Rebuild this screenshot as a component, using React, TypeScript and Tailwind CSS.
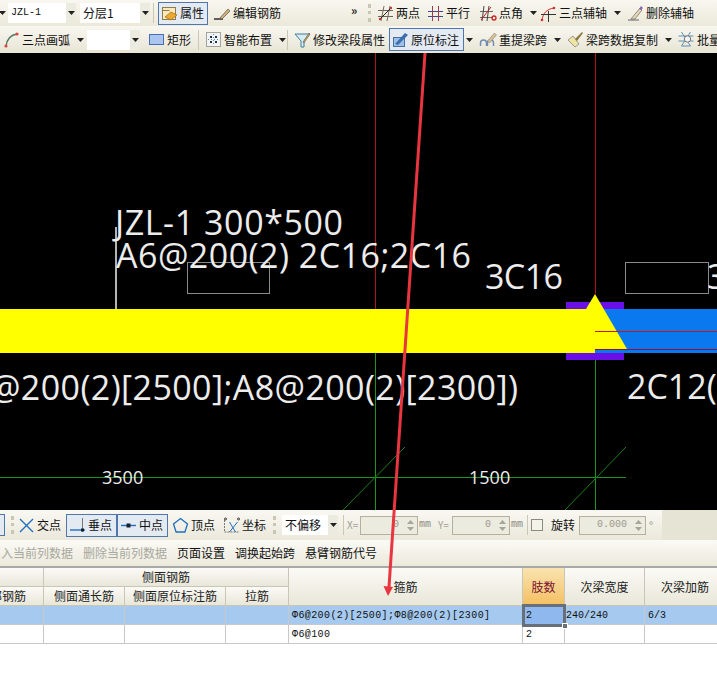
import React from "react";

const CJK = "font-['Noto_Sans_CJK_SC','Liberation_Sans',sans-serif]";

function Arrow() {
  return (
    <svg width="7" height="4" viewBox="0 0 7 4" className="shrink-0">
      <path d="M0 0h7L3.5 4z" fill="#222" />
    </svg>
  );
}

function Sep({ grip }: { grip?: boolean }) {
  if (grip) {
    return <div className="mx-[3px] h-[18px] w-[3px] shrink-0 border-l-[3px] border-dotted border-[#c9c6b3]" />;
  }
  return <div className="mx-[3px] h-[20px] w-px shrink-0 bg-[#c9c7b6]" />;
}

function Combo({ w, text, mono }: { w: string; text: string; mono?: boolean }) {
  return (
    <div className={`flex h-[20px] shrink-0 items-center justify-between bg-white pl-[3px] ${w}`}>
      <span className={`truncate leading-none text-[#111] ${mono ? "font-['Liberation_Mono',monospace] text-[10px]" : "text-[12px]"}`}>{text}</span>
      <span className="flex h-full w-[10px] items-center justify-center bg-[#ecebe0]">
        <Arrow />
      </span>
    </div>
  );
}

function Tool({
  w,
  icon,
  label,
  active,
  arrow,
}: {
  w: string;
  icon?: React.ReactNode;
  label: string;
  active?: boolean;
  arrow?: boolean;
}) {
  return (
    <div
      className={`flex h-[23px] shrink-0 items-center gap-[2px] whitespace-nowrap border px-[2px] text-[12px] leading-none text-[#111] ${w} ${
        active ? "border-[#4f77ad] bg-[#e4eaf2]" : "border-transparent"
      }`}
    >
      {icon}
      <span>{label}</span>
      {arrow && <span className="ml-[5px] flex"><Arrow /></span>}
    </div>
  );
}

const I = ({ children, w = 17 }: { children: React.ReactNode; w?: number }) => (
  <svg width={w} height="17" viewBox="0 0 17 17" fill="none" className="shrink-0">
    {children}
  </svg>
);

const IconProp = () => (
  <I>
    <rect x="1.500" y="2.500" width="13" height="12" fill="#f9e9bb" stroke="#8c7c55" />
    <path d="M1.500 5.500h7" stroke="#8c7c55" />
    <path d="M4 12l6-5 6 3-6 5z" fill="#eda92f" stroke="#a06a10" strokeWidth=".7" />
  </I>
);
const IconEdit = () => (
  <I>
    <path d="M0 14h9" stroke="#222" strokeWidth="1.400" />
    <path d="M6 13L14 4l2 2-8 8z" fill="#d8b070" stroke="#555" strokeWidth=".7" />
  </I>
);
const IconTwo = () => (
  <I>
    <path d="M1 5.500h15M1 11.500h15" stroke="#666" />
    <path d="M4 16L7 1M10 16l3-15" stroke="#7a6a5a" />
    <path d="M2 15L14 3" stroke="#222" />
    <circle cx="14" cy="3" r="1.200" fill="#c33" />
    <circle cx="3" cy="14" r="1.200" fill="#c33" />
  </I>
);
const IconPar = () => (
  <I>
    <path d="M1 6.500h15M1 11.500h15" stroke="#3a4a8a" />
    <path d="M5.500 1v15M11.500 1v15" stroke="#a03a4a" />
  </I>
);
const IconAngle = () => (
  <I w={19}>
    <path d="M1 6.500h13M1 12.500h13" stroke="#666" />
    <path d="M5 1L3 16M10 1L8 16" stroke="#444" />
    <path d="M2 15L12 2" stroke="#c22" />
    <circle cx="15" cy="13" r="2" stroke="#c22" strokeWidth="1.300" />
  </I>
);
const IconArcAxis = () => (
  <I>
    <path d="M2 15C3 8 7 4 14 3" stroke="#c22" />
    <path d="M1 9.500h15M8.500 6v11" stroke="#333" />
    <circle cx="14" cy="3" r="1.300" fill="#c33" />
    <circle cx="2" cy="15" r="1.300" fill="#c33" />
  </I>
);
const IconDel = () => (
  <I>
    <path d="M1 15h11" stroke="#888" strokeWidth="1.400" />
    <path d="M4 14L13 3l2 2-7 9z" fill="#e8d8b0" stroke="#666" strokeWidth=".7" />
    <path d="M12 4l2-3 2 2-2 2z" fill="#8a68b0" />
  </I>
);
const IconArc = () => (
  <I>
    <path d="M3 15C4 8 7 4 14 3" stroke="#4f7a68" strokeWidth="1.400" />
    <circle cx="3" cy="15" r="1.600" fill="#d44" />
    <circle cx="14" cy="3" r="1.600" fill="#d44" />
  </I>
);
const IconRect = () => (
  <I>
    <rect x="1.500" y="3.500" width="14" height="10" fill="#a9c5f0" stroke="#4a6fb0" />
  </I>
);
const IconSmart = () => (
  <I>
    <rect x="1.500" y="1.500" width="14" height="14" fill="#f3f3f3" stroke="#555" strokeDasharray="1 1" />
    <path d="M5 5h2v2H5zM10 5h2v2h-2zM5 10h2v2H5zM10 10h2v2h-2z" fill="#234" />
    <path d="M8.500 3v11M3 8.500h11" stroke="#4a8ac0" strokeDasharray="1 2" />
  </I>
);
const IconSeg = () => (
  <I>
    <path d="M1 3h15L10 10v6H7v-6z" fill="#d5ecf5" stroke="#3f7f95" />
    <path d="M9 11l6-9 1 1-6 9z" fill="#c9a25c" stroke="#555" strokeWidth=".5" />
  </I>
);
const IconOrigin = () => (
  <I>
    <rect x="1.500" y="6.500" width="11" height="9" fill="#9fc0e6" stroke="#4a6fa0" />
    <path d="M3 13L13 2l3 2-10 10z" fill="#3a6fb0" />
  </I>
);
const IconSpan = () => (
  <I w={18}>
    <path d="M1 15v-3c0-4 6-4 6 0v3M8 15v-3c0-4 6-4 6 0v3" stroke="#6b8cb5" strokeWidth="1.400" />
    <path d="M8 10l7-8 2 2-7 8z" fill="#d8c090" stroke="#777" strokeWidth=".5" />
  </I>
);
const IconCopy = () => (
  <I>
    <path d="M1 9l5-4 6 8-4 3z" fill="#efe3a5" stroke="#777" strokeWidth=".7" />
    <path d="M8 8l7-7 1 1-6 8z" fill="#8a7a40" />
  </I>
);
const IconBatch = () => (
  <I w={18}>
    <path d="M1 5h15M1 10h15M4 15h9M4 1l9 14M13 1L4 15" stroke="#5b92b8" />
    <circle cx="10" cy="8" r="3.200" fill="#f4f4f4" stroke="#777" />
  </I>
);
const IconCross = () => (
  <I>
    <path d="M2 2l13 13M15 2L2 15" stroke="#1f6fc0" strokeWidth="1.400" />
  </I>
);
const IconPerp = () => (
  <I>
    <path d="M1 13h15" stroke="#1f6fc0" strokeWidth="1.400" />
    <path d="M13.500 1v14" stroke="#777" />
    <rect x="12" y="11.500" width="3" height="3" fill="#123" />
  </I>
);
const IconMid = () => (
  <I>
    <path d="M1 8.500h15" stroke="#1f6fc0" strokeWidth="1.400" />
    <rect x="6.500" y="6.500" width="4" height="4" fill="#123" />
  </I>
);
const IconVertex = () => (
  <I>
    <path d="M8.500 1.500L15.500 7l-2.600 8H4.100L1.500 7z" stroke="#1f6fc0" strokeWidth="1.300" />
  </I>
);
const IconCoord = () => (
  <I w={18}>
    <path d="M2 3v12h15" stroke="#777" strokeDasharray="2 1" />
    <path d="M7 15l8-10M7 5l6 10" stroke="#1f6fc0" />
    <circle cx="3" cy="2" r="1" stroke="#333" />
    <circle cx="16" cy="2" r="1" stroke="#333" />
  </I>
);

function Spin({ w, value }: { w: string; value: string }) {
  return (
    <div className={`flex h-[19px] shrink-0 items-center justify-end border border-[#b2b09e] bg-[#ecebdf] leading-none text-[#9a9a90] ${w}`}>
      <span className="font-['Liberation_Mono',monospace] text-[10px]">{value}</span>
      <span className="ml-[5px] flex h-full w-[13px] flex-col items-center justify-center gap-[3px]">
        <svg width="7" height="4" viewBox="0 0 7 4"><path d="M0 4h7L3.500 0z" fill="#a5a59a" /></svg>
        <svg width="7" height="4" viewBox="0 0 7 4"><path d="M0 0h7L3.500 4z" fill="#a5a59a" /></svg>
      </span>
    </div>
  );
}

function Canvas() {
  const text = "fill-[#ececec] font-['Open_Sans',sans-serif]";
  return (
    <svg width="717" height="457" viewBox="0 53 717 457" className="block shrink-0 bg-black">
      {/* axes */}
      <path d="M0 477.500H626" stroke="#1c961c" />
      <path d="M375.500 53V309" stroke="#ad141c" />
      <path d="M375.500 353V510M595.500 349V510" stroke="#1c961c" />
      <path d="M343 510L405 447M565 510L626 447" stroke="#1a801a" />
      {/* beam */}
      <rect x="566" y="302" width="58" height="7" fill="#6a0fe6" />
      <rect x="566" y="353" width="58" height="7" fill="#6a0fe6" />
      <rect x="595" y="309" width="122" height="44" fill="#0a78ee" />
      <rect x="0" y="309" width="595" height="44" fill="#ffff00" />
      <path d="M586 309L595 294L627 349H595z" fill="#ffff00" />
      <path d="M595.500 53V294" stroke="#ad141c" />
      <path d="M595 331.500H717" stroke="#c41818" />
      <path d="M595 349.500H717" stroke="#8a1040" />
      {/* boxes */}
      <rect x="187.500" y="262.500" width="82" height="31" stroke="#8a8a8a" fill="none" />
      <rect x="625.500" y="262.500" width="83" height="31" stroke="#8a8a8a" fill="none" />
      <path d="M116 227V309" stroke="#f0f0f0" strokeWidth="1.500" />
      {/* labels */}
      <text x="115" y="235" fontSize="34" textLength="228" className={text}>JZL-1 300*500</text>
      <text x="116" y="268" fontSize="34" textLength="355" className={text}>A6@200(2) 2C16;2C16</text>
      <text x="485" y="289" fontSize="34" textLength="78" className={text}>3C16</text>
      <text x="707" y="289" fontSize="34" className={text}>3</text>
      <text x="-10" y="400" fontSize="34" textLength="528" className={text}>@200(2)[2500];A8@200(2)[2300])</text>
      <text x="627" y="399" fontSize="34" className={text}>2C12(</text>
      <text x="102" y="484" fontSize="18" className={text}>3500</text>
      <text x="469" y="484" fontSize="18" className={text}>1500</text>
    </svg>
  );
}

function Head({ children, className = "" }: { children?: React.ReactNode; className?: string }) {
  return (
    <div className={`flex items-center justify-center overflow-hidden whitespace-nowrap border-r border-b border-[#c8c6b6] bg-gradient-to-b from-[#fbfaf6] to-[#e9e7d9] text-[12px] leading-none text-[#222] ${className}`}>
      {children}
    </div>
  );
}

function Cell({ children, className = "" }: { children?: React.ReactNode; className?: string }) {
  return (
    <div className={`flex items-center overflow-hidden whitespace-nowrap border-r border-b border-[#c8c8c8] pl-[3px] pt-[2px] font-['Liberation_Mono','Noto_Sans_CJK_SC',monospace] text-[10px] leading-none text-[#111] ${className}`}>
      {children}
    </div>
  );
}

export default function App() {
  return (
    <div className={`relative h-[700px] w-[717px] overflow-hidden bg-white ${CJK}`}>
      {/* toolbar row 1 */}
      <div className="flex h-[26px] items-center overflow-hidden bg-gradient-to-b from-[#f8f7f0] to-[#ece9da]">
        <span className="ml-[-1px] mr-[2px] flex"><Arrow /></span>
        <Combo w="w-[68px]" text="JZL-1" mono />
        <div className="w-[4px] shrink-0" />
        <Combo w="w-[70px]" text="分层1" />
        <Sep />
        <div className="w-px shrink-0" />
        <Tool w="w-[50px]" icon={<IconProp />} label="属性" active />
        <div className="w-[3px] shrink-0" />
        <Tool w="w-[140px]" icon={<IconEdit />} label="编辑钢筋" />
        <span className="w-[14px] shrink-0 -translate-y-[3px] text-[12px] font-bold leading-none text-[#222]">»</span>
        <Sep grip />
        <Tool w="w-[50px]" icon={<IconTwo />} label="两点" />
        <Tool w="w-[51px]" icon={<IconPar />} label="平行" />
        <Tool w="w-[62px]" icon={<IconAngle />} label="点角" arrow />
        <Tool w="w-[87px]" icon={<IconArcAxis />} label="三点辅轴" arrow />
        <Tool w="w-[76px]" icon={<IconDel />} label="删除辅轴" />
      </div>
      {/* toolbar row 2 */}
      <div className="flex h-[27px] items-center overflow-hidden bg-gradient-to-b from-[#f8f7f0] to-[#e8e5d5]">
        <Tool w="w-[87px]" icon={<IconArc />} label="三点画弧" arrow />
        <Combo w="w-[53px]" text="" />
        <div className="w-[5px] shrink-0" />
        <Tool w="w-[50px]" icon={<IconRect />} label="矩形" />
        <Sep />
        <Tool w="w-[82px]" icon={<IconSmart />} label="智能布置" arrow />
        <Sep />
        <Tool w="w-[98px]" icon={<IconSeg />} label="修改梁段属性" />
        <Tool w="w-[75px]" icon={<IconOrigin />} label="原位标注" active />
        <span className="ml-[2px] mr-[3px] flex"><Arrow /></span>
        <Tool w="w-[88px]" icon={<IconSpan />} label="重提梁跨" arrow />
        <Tool w="w-[110px]" icon={<IconCopy />} label="梁跨数据复制" arrow />
        <Tool w="w-[60px]" icon={<IconBatch />} label="批量" />
      </div>

      <Canvas />

      {/* snap toolbar */}
      <div className="flex h-[30px] items-center overflow-hidden bg-[#e6e4d4]">
        <div className="flex h-full w-[662px] shrink-0 items-center bg-gradient-to-b from-[#f9f8f2] to-[#ebe9db]">
          <div className="ml-[-1px] h-[22px] w-[6px] shrink-0 border border-[#4f77ad] bg-[#e4eaf2]" />
          <div className="w-[3px] shrink-0" />
          <Sep grip />
          <Tool w="w-[49px] -ml-[2px]" icon={<IconCross />} label="交点" />
          <div className="w-[2px] shrink-0" />
          <Tool w="w-[51px]" icon={<IconPerp />} label="垂点" active />
          <Tool w="w-[51px]" icon={<IconMid />} label="中点" active />
          <div className="w-px shrink-0" />
          <Tool w="w-[50px]" icon={<IconVertex />} label="顶点" />
          <Tool w="w-[51px]" icon={<IconCoord />} label="坐标" />
          <Sep grip />
          <div className="w-[3px] shrink-0" />
          <Combo w="w-[56px]" text="不偏移" />
          <div className="w-[2px] shrink-0" />
          <Sep />
          <span className="w-[13px] shrink-0 text-[10px] leading-none text-[#a0a096]">X=</span>
          <Spin w="w-[58px]" value="0" />
          <span className="w-[20px] shrink-0 pl-[1px] font-['Liberation_Mono',monospace] text-[10px] leading-none text-[#8a8a80]">mm</span>
          <span className="w-[14px] shrink-0 text-[10px] leading-none text-[#a0a096]">Y=</span>
          <Spin w="w-[58px]" value="0" />
          <span className="w-[14px] shrink-0 pl-[1px] font-['Liberation_Mono',monospace] text-[10px] leading-none text-[#8a8a80]">mm</span>
          <Sep />
          <div className="h-[12px] w-[12px] shrink-0 border border-[#8a8a80] bg-[#f4f3ea]" />
          <span className="ml-[8px] w-[28px] shrink-0 text-[12px] leading-none text-[#111]">旋转</span>
          <Spin w="w-[67px]" value="0.000" />
          <span className="ml-[3px] text-[11px] leading-none text-[#8a8a80]">°</span>
        </div>
      </div>

      {/* action bar */}
      <div className="flex h-[26px] items-center overflow-hidden whitespace-nowrap bg-gradient-to-b from-[#fbfaf5] to-[#ece9dc] text-[12px] leading-none">
        <span className="ml-[1px] w-[82px] shrink-0 text-[#a8a89e]">入当前列数据</span>
        <span className="w-[94px] shrink-0 text-[#a8a89e]">删除当前列数据</span>
        <span className="w-[58px] shrink-0 text-[#111]">页面设置</span>
        <span className="w-[70px] shrink-0 text-[#111]">调换起始跨</span>
        <span className="shrink-0 text-[#111]">悬臂钢筋代号</span>
      </div>

      {/* grid */}
      <div className="grid grid-cols-[44px_81px_101px_63px_234px_42px_80px_80px] grid-rows-[19px_19px_19px_19px] border-t-2 border-[#a8a8a8]">
        <Head className="row-span-1" />
        <Head className="col-span-3">侧面钢筋</Head>
        <Head className="col-start-5 row-span-2 row-start-1">箍筋</Head>
        <Head className="col-start-6 row-span-2 row-start-1 !from-[#f9e3b0] !to-[#f3c060] !text-[#7a1030]">肢数</Head>
        <Head className="col-start-7 row-span-2 row-start-1">次梁宽度</Head>
        <Head className="col-start-8 row-span-2 row-start-1 border-r-0">次梁加筋</Head>
        <Head className="col-start-1 row-start-2 !justify-end pr-[17px]">部钢筋</Head>
        <Head className="col-start-2 row-start-2">侧面通长筋</Head>
        <Head className="col-start-3 row-start-2">侧面原位标注筋</Head>
        <Head className="col-start-4 row-start-2">拉筋</Head>

        <Cell className="bg-[#a6c9ef]" />
        <Cell className="bg-[#a6c9ef]" />
        <Cell className="bg-[#a6c9ef]" />
        <Cell className="bg-[#a6c9ef]" />
        <Cell className="bg-[#a6c9ef] tracking-[0.4px]">Φ6@200(2)[2500];Φ8@200(2)[2300]</Cell>
        <div className="relative z-10 -mx-px -my-[2px] flex items-center border-[3px] border-[#67707a] bg-[#8fb8ee] pl-px font-['Liberation_Mono',monospace] text-[10px] leading-none text-[#111]">
          2
          <span className="absolute bottom-[-5px] right-[-5px] h-[6px] w-[6px] border border-white bg-[#67707a]" />
        </div>
        <Cell className="bg-[#a6c9ef] !pl-[1px]">240/240</Cell>
        <Cell className="bg-[#a6c9ef] border-r-0">6/3</Cell>

        <Cell />
        <Cell />
        <Cell />
        <Cell />
        <Cell className="tracking-[0.4px]">Φ6@100</Cell>
        <Cell>2</Cell>
        <Cell />
        <Cell className="!border-r-0" />
      </div>

      {/* red annotation arrow, drawn over the page */}
      <svg width="717" height="700" viewBox="0 0 717 700" className="pointer-events-none absolute left-0 top-0">
        <path d="M425 53L389 587" stroke="#e8353f" strokeWidth="3" />
        <path d="M383.500 586L393 587L388 596z" fill="#e8353f" />
      </svg>
    </div>
  );
}
